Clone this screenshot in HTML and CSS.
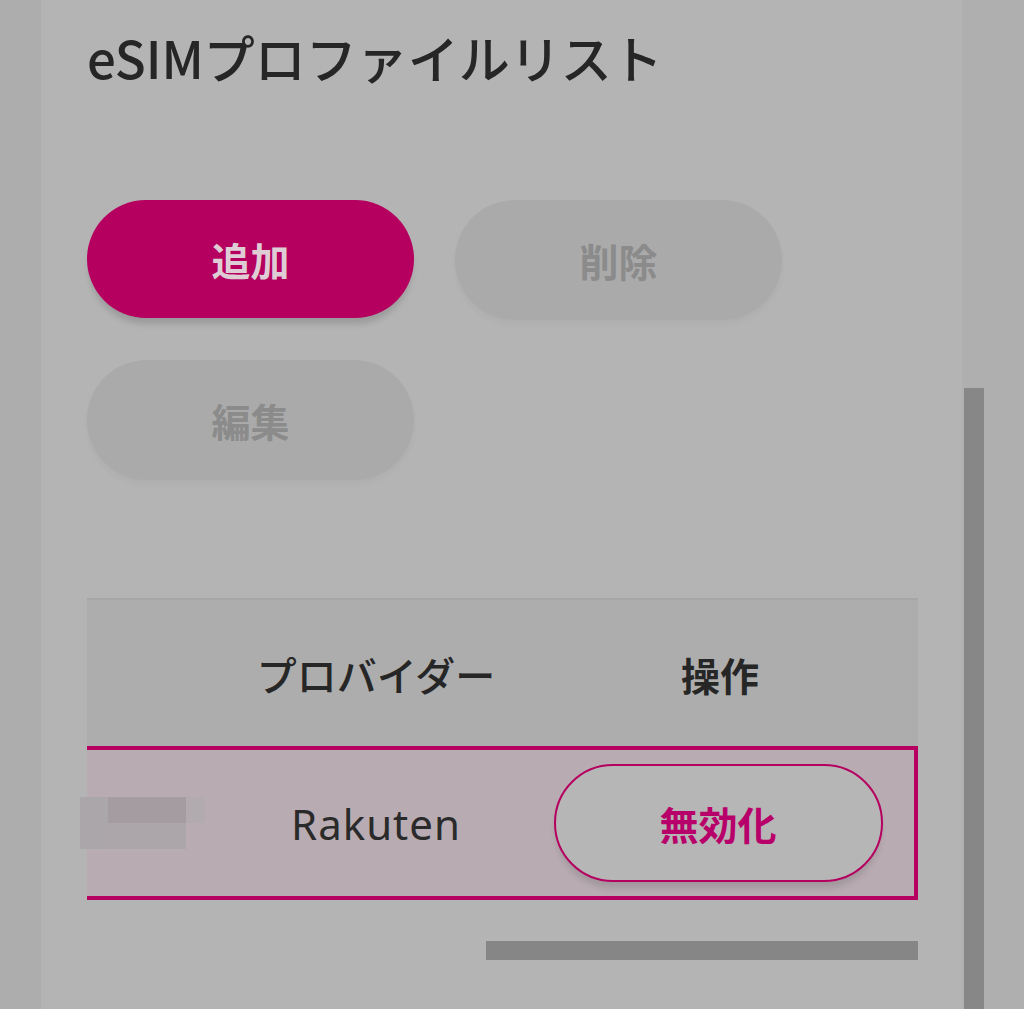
FILE: index.html
```html
<!DOCTYPE html>
<html lang="ja">
<head>
<meta charset="utf-8">
<link rel="stylesheet" href="styles.css">
</head>
<body>
<div class="page">
  <div class="gutter-left"></div>
  <main class="panel">
    <h1 class="title">eSIMプロファイルリスト</h1>
    <div class="actions">
      <button class="btn btn-primary">追加</button>
      <button class="btn btn-disabled">削除</button>
      <button class="btn btn-disabled">編集</button>
    </div>
    <div class="table-wrap">
      <div class="table">
        <div class="row head">
          <div class="cell"></div>
          <div class="cell kana">プロバイダー</div>
          <div class="cell">操作</div>
        </div>
        <div class="row selected">
          <div class="cell name">
            <div class="mosaic">
              <span class="m1"></span><span class="m2"></span><span class="m3"></span><span class="m4"></span>
            </div>
          </div>
          <div class="cell provider">Rakuten</div>
          <div class="cell op"><button class="btn-outline">無効化</button></div>
        </div>
      </div>
      <div class="hscroll"><div class="hthumb"></div></div>
    </div>
  </main>
  <div class="gutter-right"><div class="vthumb"></div></div>
</div>
</body>
</html>
```

FILE: styles.css
```css
html, body {
  margin: 0;
  padding: 0;
  height: 100%;
  background: #b3b3b3;
  font-family: "Noto Sans CJK JP", "Noto Sans", sans-serif;
}
.page {
  display: flex;
  height: 1009px;
  overflow: hidden;
}
.gutter-left {
  width: 41px;
  background: #adadad;
  flex: none;
}
.panel {
  width: 921px;
  flex: none;
  background: #b4b4b4;
  padding: 0 0 0 46px;
  box-sizing: border-box;
}
.gutter-right {
  flex: 1;
  background: #afafaf;
  padding: 388px 0 0 2px;
}
.vthumb {
  width: 20px;
  height: 100%;
  background: #878787;
}
.title {
  margin: 32px 0 0;
  font-size: 51px;
  line-height: 1;
  font-weight: 500;
  color: #262626;
  letter-spacing: 0;
}
.actions {
  display: flex;
  flex-wrap: wrap;
  width: 700px;
  column-gap: 41px;
  row-gap: 40px;
  margin-top: 117px;
}
.btn {
  width: 327px;
  height: 120px;
  border: none;
  border-radius: 60px;
  font-family: "Noto Sans CJK JP", sans-serif;
  font-size: 39px;
  font-weight: 700;
  padding: 0;
}
.btn-primary {
  background: #b5005f;
  color: #dfcdd6;
  height: 118px;
  box-shadow: 0 8px 6px -2px rgba(0,0,0,0.14);
  margin-bottom: 2px;
}
.btn-disabled {
  background: #aaaaaa;
  color: #8b8b8b;
  box-shadow: 0 4px 6px rgba(0,0,0,0.03);
}
.table-wrap {
  margin-top: 118px;
  width: 831px;
}
.table {
  border-top: 2px solid #a6a6a6;
}
.row {
  display: grid;
  grid-template-columns: 143px 292px 396px;
  align-items: center;
}
.head {
  height: 146px;
  background: #adadad;
  font-size: 39px;
  font-weight: 700;
  color: #262626;
}
.cell {
  text-align: center;
}
.head .cell {
  padding-top: 2px;
}
.head .kana {
  font-weight: 500;
  font-size: 40px;
}
.selected {
  height: 146px;
  background: #b8acb2;
  border: 4px solid #b5005f;
  border-left: none;
  box-sizing: content-box;
}
.name {
  position: relative;
  height: 100%;
}
.mosaic {
  position: absolute;
  left: -7px;
  top: 47px;
  width: 125px;
  height: 52px;
}
.mosaic span {
  position: absolute;
  display: block;
}
.m1 { left: 0; top: 0; width: 28px; height: 52px; background: #aba6a9; }
.m2 { left: 28px; top: 0; width: 78px; height: 26px; background: #a49ca1; }
.m3 { left: 28px; top: 26px; width: 78px; height: 26px; background: #aca6aa; }
.m4 { left: 106px; top: 0; width: 19px; height: 26px; background: #b1abaf; }
.provider {
  font-family: "Noto Sans", sans-serif;
  font-size: 42px;
  font-weight: 400;
  letter-spacing: 1px;
  color: #2a2a2a;
}
.op {
  display: flex;
  justify-content: center;
}
.btn-outline {
  width: 329px;
  height: 118px;
  border: 2px solid #b5005f;
  border-radius: 60px;
  background: #b6b6b6;
  color: #b8006a;
  font-family: "Noto Sans CJK JP", sans-serif;
  font-size: 39px;
  font-weight: 700;
  padding: 0;
  margin-right: 4px;
  box-shadow: 0 8px 6px -2px rgba(0,0,0,0.12);
}
.hscroll {
  margin-top: 41px;
  display: flex;
  justify-content: flex-end;
}
.hthumb {
  width: 432px;
  height: 19px;
  background: #868686;
}
```
